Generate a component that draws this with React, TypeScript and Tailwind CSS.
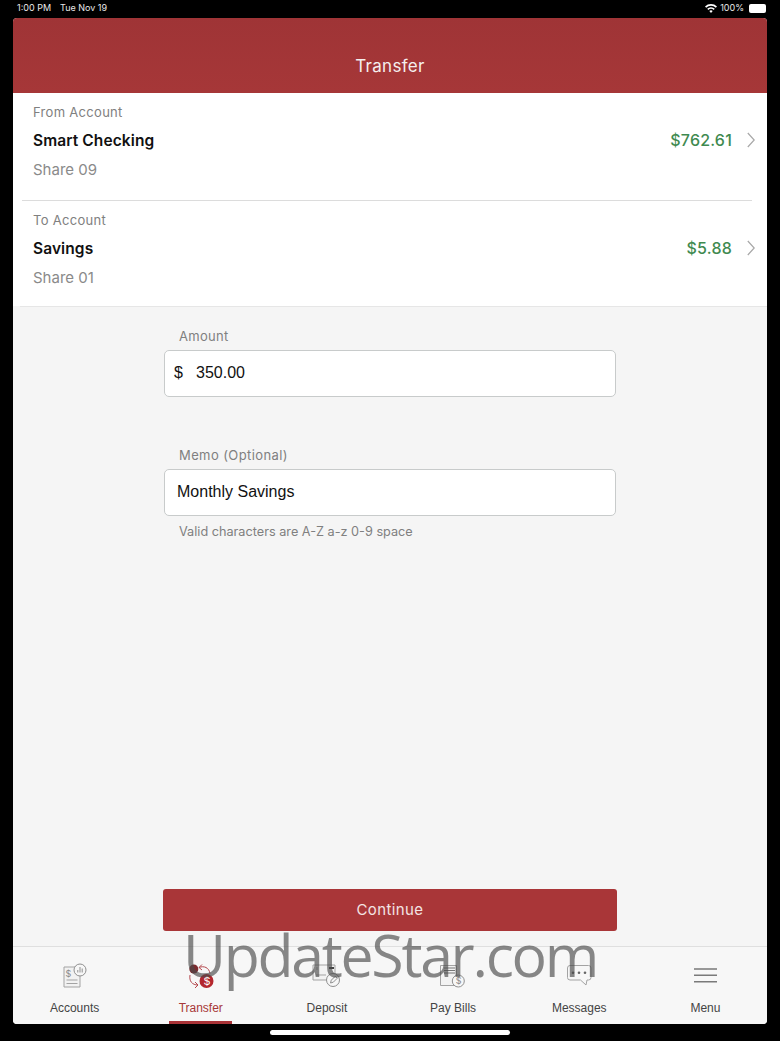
import React from 'react';

const inter = { fontFamily: 'Inter, sans-serif' };
const helv = { fontFamily: '"Liberation Sans", sans-serif' };

const AccountsIcon = () => (
  <svg width="40" height="30" viewBox="0 0 40 30" fill="none" stroke="#a3a3a3" strokeWidth="1">
    <path d="M9 5h16v20H9z" fill="#f2f2f2" />
    <path d="M11.500 18h11M11.500 21.500h11" />
    <circle cx="25" cy="8" r="6" fill="#f7f7f7" stroke="#8f8f8f" />
    <path d="M22.800 10.500V8M25 10.500V5M27.200 10.500V6.500" stroke="#8f8f8f" />
    <text x="10.500" y="14.500" fontSize="9" fill="#8a8a8a" stroke="none" fontFamily="Inter, sans-serif">$</text>
  </svg>
);

const TransferIcon = () => (
  <svg width="40" height="30" viewBox="0 0 40 30" fill="none" stroke="#b5474d" strokeWidth="1">
    <path d="M18 5.500c5-2 10 0 11 6M21 2.500l-3 3 3 2.500" />
    <path d="M9 13c-1 6 2 10 8 10M14 20l3 3-3 3" />
    <circle cx="12.800" cy="7" r="4.500" fill="#7c2a2e" stroke="none" />
    <circle cx="25.500" cy="19" r="7" fill="#b3262e" stroke="none" />
    <text x="22.500" y="23" fontSize="11" fill="#fff" stroke="none" fontFamily="Inter, sans-serif">$</text>
  </svg>
);

const DepositIcon = () => (
  <svg width="40" height="30" viewBox="0 0 40 30" fill="none" stroke="#a3a3a3" strokeWidth="1">
    <path d="M6 3h22v15H6z" fill="#f2f2f2" />
    <path d="M10 5v3M9 13h10" />
    <path d="M22 6h5" stroke="#444" strokeWidth="2" />
    <circle cx="26" cy="18" r="6.500" fill="#f7f7f7" stroke="#8f8f8f" />
    <path d="M23.500 21l.8-2.800 4-4 2 2-4 4z" stroke="#8f8f8f" />
  </svg>
);

const BillsIcon = () => (
  <svg width="40" height="30" viewBox="0 0 40 30" fill="none" stroke="#a3a3a3" strokeWidth="1">
    <path d="M7.500 3.500h16v20h-16z" fill="#f2f2f2" />
    <path d="M11 6h11M11 8.500h11M11 11h11" stroke="#777" />
    <circle cx="25.300" cy="19" r="6" fill="#f7f7f7" stroke="#8f8f8f" />
    <text x="22.700" y="22.300" fontSize="9" fill="#8a8a8a" stroke="none" fontFamily="Inter, sans-serif">$</text>
  </svg>
);

const MessagesIcon = () => (
  <svg width="40" height="30" viewBox="0 0 40 30" fill="none" stroke="#a3a3a3" strokeWidth="1">
    <path d="M11 3.500h18.500a2.500 2.500 0 0 1 2.500 2.500v9.500a2.500 2.500 0 0 1-2.500 2.500h-1.500l-1 5-5.500-5H11a2.500 2.500 0 0 1-2.500-2.500V6A2.500 2.500 0 0 1 11 3.500z" fill="#f7f7f7" />
    <circle cx="14" cy="10.700" r="1.300" fill="#666" stroke="none" />
    <circle cx="20" cy="10.700" r="1.300" fill="#666" stroke="none" />
    <circle cx="26" cy="10.700" r="1.300" fill="#666" stroke="none" />
  </svg>
);

const MenuIcon = () => (
  <svg width="40" height="30" viewBox="0 0 40 30" fill="none" stroke="#7a7a7a" strokeWidth="1.500">
    <path d="M9 7h23M9 13.300h23M9 19.700h23" />
  </svg>
);

const Chevron = () => (
  <svg width="8" height="16" viewBox="0 0 8 16" fill="none" stroke="#a8a8a8" strokeWidth="1.200">
    <path d="M.8 1 7.200 8 .8 15" />
  </svg>
);

const AccountRow: React.FC<{ label: string; name: string; share: string; balance: string; rowClass: string }> = ({
  label, name, share, balance, rowClass,
}) => (
  <div className={`mr-[15px] ml-[9px] flex items-start pt-[11px] pl-[11px] ${rowClass}`}>
    <div className="flex-1">
      <div className="text-[13px] leading-4 tracking-[0.3px] text-[#808080]">{label}</div>
      <div className="mt-[11px] text-[15.5px] leading-5 font-semibold tracking-[0.1px] text-[#111]">{name}</div>
      <div className="mt-[9px] text-[15px] leading-5 text-[#8a8a8a]">{share}</div>
    </div>
    <div className="-mr-[3px] mt-[26px] flex h-5 items-center gap-[15px]">
      <span className="text-base font-medium tracking-[0.2px] text-[#3f8a50]">{balance}</span>
      <Chevron />
    </div>
  </div>
);

const tabs = [
  { label: 'Accounts', icon: <AccountsIcon /> },
  { label: 'Transfer', icon: <TransferIcon />, active: true },
  { label: 'Deposit', icon: <DepositIcon /> },
  { label: 'Pay Bills', icon: <BillsIcon /> },
  { label: 'Messages', icon: <MessagesIcon /> },
  { label: 'Menu', icon: <MenuIcon /> },
];

export default function App() {
  return (
    <div className="relative flex h-[1041px] w-[780px] flex-col overflow-hidden bg-black" style={inter}>
      {/* Status bar */}
      <div className="flex h-[18px] shrink-0 items-center justify-between pr-[14px] pb-[2px] pl-[17px] text-[9px] text-[#e8e8e8]">
        <div className="flex gap-[9px]">
          <span>1:00 PM</span>
          <span>Tue Nov 19</span>
        </div>
        <div className="flex items-center gap-[3px]">
          <svg width="12" height="9" viewBox="0 0 12 9" fill="#fff">
            <path d="M6 9 4.300 7a2.600 2.600 0 0 1 3.400 0zM3.300 5.900 2.200 4.700a5.500 5.500 0 0 1 7.600 0L8.700 5.900a4 4 0 0 0-5.400 0zM1.200 3.700 0 2.500a8.500 8.500 0 0 1 12 0l-1.200 1.200a7 7 0 0 0-9.600 0z" />
          </svg>
          <span>100%</span>
          <span className="ml-[2px] h-[9px] w-[17px] rounded-[2px] bg-white" />
        </div>
      </div>

      {/* App window */}
      <div className="mx-[13px] flex h-[1006px] flex-col overflow-hidden rounded-[4px] bg-[#f5f5f5]">
        <div className="flex h-[75px] shrink-0 items-end justify-center bg-gradient-to-b from-[#9f3436] to-[#a63738] pb-[15px] text-[17px] leading-6 tracking-[0.3px] text-[#f5eeee]">
          Transfer
        </div>

        <div className="bg-white">
          <AccountRow label="From Account" name="Smart Checking" share="Share 09" balance="$762.61" rowClass="h-[108px] border-b border-[#dcdcdc]" />
          <AccountRow label="To Account" name="Savings" share="Share 01" balance="$5.88" rowClass="h-[105px]" />
        </div>
        <div className="ml-[7px] h-px bg-[#e6e6e6]" />

        <div className="mx-auto mt-[21px] w-[452px] flex-1">
          <label className="ml-[15px] block text-[13px] leading-4 tracking-[0.3px] text-[#808080]">Amount</label>
          <div className="mt-[6px] flex h-[47px] items-center rounded-[5px] border border-[#c8cbcb] bg-white pb-[2px] pl-[9px] text-base text-[#111]" style={helv}>
            <span className="w-[22px]">$</span>
            <span>350.00</span>
          </div>
          <label className="mt-[50px] ml-[15px] block text-[13px] leading-4 tracking-[0.4px] text-[#808080]">Memo (Optional)</label>
          <div className="mt-[6px] flex h-[47px] items-center rounded-[5px] border border-[#c8cbcb] bg-white pb-[2px] pl-[12px] text-base text-[#111]" style={helv}>
            Monthly Savings
          </div>
          <div className="mt-2 ml-[15px] text-[12.7px] leading-4 text-[#808080]">Valid characters are A-Z a-z 0-9 space</div>
        </div>

        <div className="mx-auto mb-[15px] flex h-[42px] w-[454px] items-center justify-center rounded-[3px] bg-[#a93638] text-[15px] tracking-[0.4px] text-[#f3e4e4]">
          Continue
        </div>

        {/* Tab bar */}
        <div className="-mx-[1.5px] grid h-[78px] shrink-0 grid-cols-6 border-t border-[#dfdfdf] bg-[#f7f7f7]" style={helv}>
          {tabs.map(tab => (
            <div key={tab.label} className="relative flex flex-col items-center pt-[15px]">
              {tab.icon}
              <span className={`mt-[8px] text-xs leading-4 ${tab.active ? 'text-[#a83838]' : 'text-[#444]'}`}>
                {tab.label}
              </span>
              {tab.active && <span className="absolute bottom-0 h-[3px] w-[63px] bg-[#a83236]" />}
            </div>
          ))}
        </div>
      </div>

      {/* Home indicator */}
      <div className="absolute bottom-[6px] left-[270px] h-[5px] w-[240px] rounded-full bg-white" />

      {/* Watermark */}
      <div className="pointer-events-none absolute top-[916px] left-[183px] text-[59px] leading-[76px] tracking-[-2.3px] text-[#4a4a4a]/65" style={{ fontFamily: '"Open Sans", sans-serif' }}>
        UpdateStar.com
      </div>
    </div>
  );
}
